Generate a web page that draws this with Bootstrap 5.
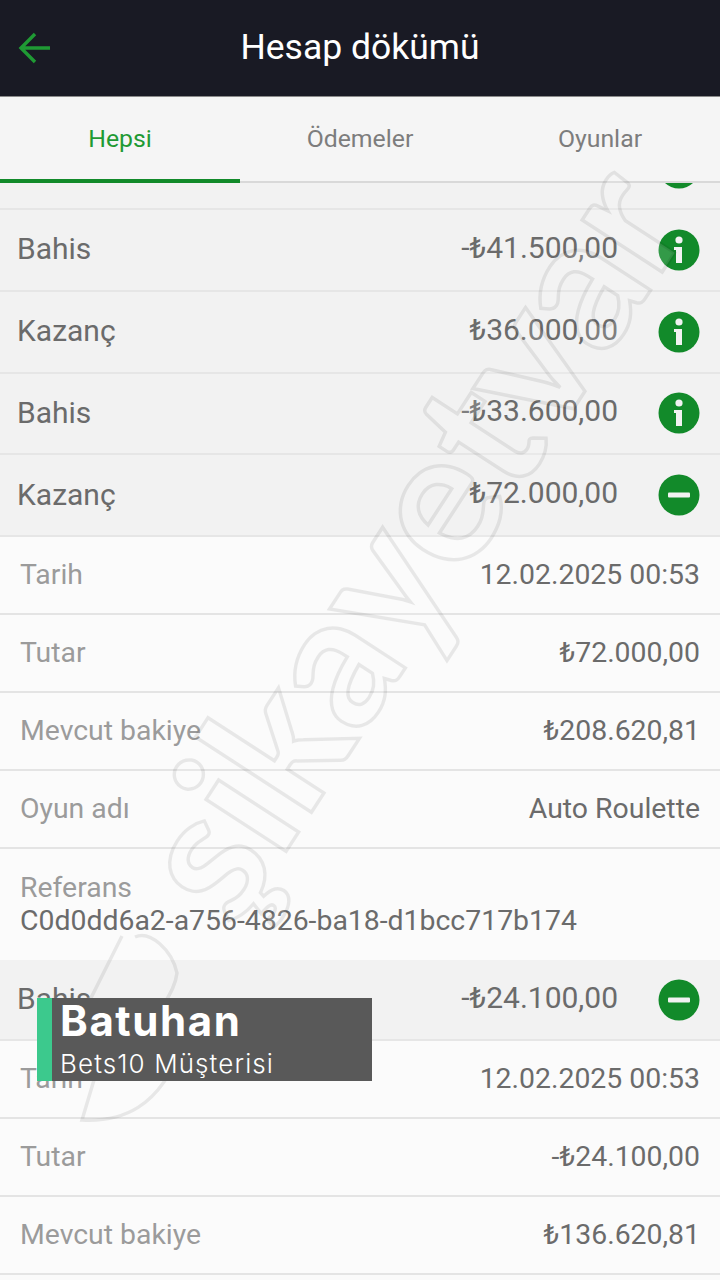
<!DOCTYPE html>
<html lang="tr">
<head>
  <meta charset="UTF-8">
  <title>Hesap dökümü</title>
  <link href="https://cdn.jsdelivr.net/npm/bootstrap@5.3.3/dist/css/bootstrap.min.css" rel="stylesheet">
  <style>
    html, body { margin: 0; height: 1280px; overflow: hidden; }
    body { font-family: Roboto, "Liberation Sans", sans-serif; background: #fafafa; position: relative; width: 720px; }
    .top-head { height: 97px; background: #191a24; border-bottom: 1px solid #8a8a8a; position: relative; }
    .top-head svg { position: absolute; left: 18px; top: 31px; }
    .top-head h1 { font-size: 35.5px; font-weight: 400; color: #fff; margin: 0; line-height: 94px; text-align: center; }
    .tab-strip { height: 86px; background: #f5f5f5; border-bottom: 2px solid #d9d9d9; }
    .tab-item { flex: 1 1 0; text-align: center; font-size: 24.8px; color: #7d7d7d; line-height: 84px; height: 86px; }
    .tab-item.on { color: #1f9a34; border-bottom: 4px solid #128a2a; }
    .tx-row { height: 81.75px; background: #f2f2f2; border-bottom: 2px solid #e6e6e6; padding: 0 20px 0 17px; color: #6b6b6b; }
    .tx-row.cut { height: 27px; overflow: hidden; align-items: flex-start !important; justify-content: flex-end; }
    .tx-row.cut svg { margin-top: -36px; }
    .tx-row.short { height: 81px; }
    .tx-name { font-size: 30px; flex: 1; margin-top: -2px; }
    .tx-sum { font-size: 30px; margin-right: 40px; margin-top: -5px; }
    .det-row { height: 78px; background: #fbfbfb; border-bottom: 2px solid #e4e4e4; padding: 0 20px; font-size: 28.4px; }
    .det-key { color: #9b9b9b; }
    .det-val { color: #6b6b6b; }
    .det-ref { height: 111px; background: #fbfbfb; padding: 22px 20px 0; font-size: 28.4px; line-height: 33px; }
    .mark-layer { position: absolute; left: 0; top: 0; width: 720px; height: 1280px; pointer-events: none; }
    .mark-word { font-family: Lato, sans-serif; font-size: 186px; font-weight: 700; fill: rgba(255,255,255,.14); stroke: rgba(0,0,0,.08); stroke-width: 3.5; }
    .mark-logo { fill: none; stroke: rgba(0,0,0,.08); stroke-width: 3.5; }
    .name-tag { position: absolute; left: 37px; top: 998px; width: 335px; height: 83px; background: #595959; border-left: 15px solid #3cc98d; padding-left: 8px; color: #fff; font-family: Inter, sans-serif; }
    .name-big { font-size: 42px; font-weight: 700; line-height: 46px; letter-spacing: 1.6px; }
    .name-sub { font-size: 26px; font-weight: 300; line-height: 30px; letter-spacing: 1.1px; margin-top: 5px; }
  </style>
</head>
<body>
  <div class="top-head">
    <svg width="34" height="34" viewBox="0 0 34 34" fill="none" stroke="#1f9a34" stroke-width="3.4"><path d="M32 17H4M17 3 3 17l14 14"/></svg>
    <h1>Hesap dökümü</h1>
  </div>

  <div class="tab-strip d-flex">
    <div class="tab-item on">Hepsi</div>
    <div class="tab-item">Ödemeler</div>
    <div class="tab-item">Oyunlar</div>
  </div>

  <div class="tx-row cut d-flex align-items-center">
    <svg width="42" height="42"><use href="#ico-info"/></svg>
  </div>
  <div class="tx-row d-flex align-items-center"><span class="tx-name">Bahis</span><span class="tx-sum">-₺41.500,00</span><svg width="42" height="42"><use href="#ico-info"/></svg></div>
  <div class="tx-row d-flex align-items-center"><span class="tx-name">Kazanç</span><span class="tx-sum">₺36.000,00</span><svg width="42" height="42"><use href="#ico-info"/></svg></div>
  <div class="tx-row d-flex align-items-center"><span class="tx-name">Bahis</span><span class="tx-sum">-₺33.600,00</span><svg width="42" height="42"><use href="#ico-info"/></svg></div>
  <div class="tx-row d-flex align-items-center"><span class="tx-name">Kazanç</span><span class="tx-sum">₺72.000,00</span><svg width="42" height="42"><use href="#ico-minus"/></svg></div>

  <div class="det-row d-flex align-items-center justify-content-between"><span class="det-key">Tarih</span><span class="det-val">12.02.2025 00:53</span></div>
  <div class="det-row d-flex align-items-center justify-content-between"><span class="det-key">Tutar</span><span class="det-val">₺72.000,00</span></div>
  <div class="det-row d-flex align-items-center justify-content-between"><span class="det-key">Mevcut bakiye</span><span class="det-val">₺208.620,81</span></div>
  <div class="det-row d-flex align-items-center justify-content-between"><span class="det-key">Oyun adı</span><span class="det-val">Auto Roulette</span></div>
  <div class="det-ref"><div class="det-key">Referans</div><div class="det-val">C0d0dd6a2-a756-4826-ba18-d1bcc717b174</div></div>

  <div class="tx-row short d-flex align-items-center"><span class="tx-name">Bahis</span><span class="tx-sum">-₺24.100,00</span><svg width="42" height="42"><use href="#ico-minus"/></svg></div>

  <div class="det-row d-flex align-items-center justify-content-between"><span class="det-key">Tarih</span><span class="det-val">12.02.2025 00:53</span></div>
  <div class="det-row d-flex align-items-center justify-content-between"><span class="det-key">Tutar</span><span class="det-val">-₺24.100,00</span></div>
  <div class="det-row d-flex align-items-center justify-content-between"><span class="det-key">Mevcut bakiye</span><span class="det-val">₺136.620,81</span></div>

  <svg class="mark-layer" viewBox="0 0 720 1280" aria-hidden="true">
    <path class="mark-logo" d="M122 936 84 1012l16 48-18 60c38 2 78-10 101-77M135 937c15-7 37 13 42 36-2 17-12 27-27 57"/>
    <text class="mark-word" transform="translate(235 930) rotate(-57)">şikayetvar</text>
  </svg>

  <div class="name-tag">
    <div class="name-big">Batuhan</div>
    <div class="name-sub">Bets10 Müşterisi</div>
  </div>

  <svg width="0" height="0" class="position-absolute">
    <defs>
      <g id="ico-info"><circle cx="21" cy="21" r="20.5" fill="#128a2a"/><circle cx="21" cy="11" r="3.6" fill="#f2f2f2"/><path d="M16 18H24V34H18V21H16Z" fill="#f2f2f2"/></g>
      <g id="ico-minus"><circle cx="21" cy="21" r="20.5" fill="#128a2a"/><rect x="10" y="18.5" width="22" height="5" rx="1" fill="#f2f2f2"/></g>
    </defs>
  </svg>

  <script src="https://cdn.jsdelivr.net/npm/bootstrap@5.3.3/dist/js/bootstrap.bundle.min.js"></script>
</body>
</html>
